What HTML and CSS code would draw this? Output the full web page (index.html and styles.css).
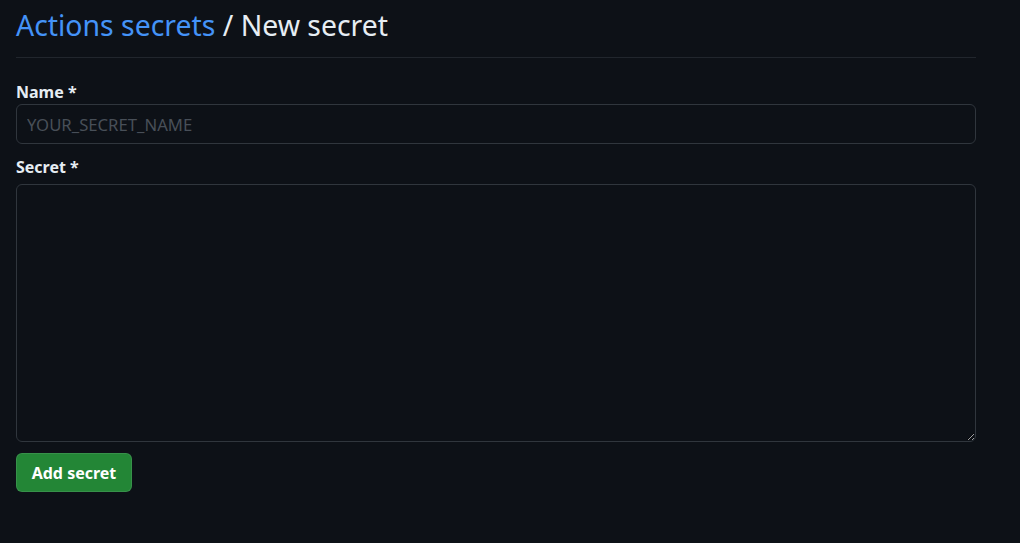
FILE: index.html
```html
<!DOCTYPE html>
<html>
<head>
    <meta charset="utf-8">
    <title>New secret</title>
    <link rel="stylesheet" href="styles.css">
</head>
<body>
    <div class="page">
        <div class="subhead">
            <h2 class="subhead-heading"><a href="#">Actions secrets</a> / New secret</h2>
        </div>
        <form class="secret-form" onsubmit="return false">
            <div class="form-group">
                <label for="secret_name">Name *</label>
                <input type="text" id="secret_name" class="form-control" placeholder="YOUR_SECRET_NAME">
            </div>
            <div class="form-group form-group-secret">
                <label for="secret_value">Secret *</label>
                <textarea id="secret_value" class="form-control"></textarea>
            </div>
            <button type="submit" class="btn-primary">Add secret</button>
        </form>
    </div>
</body>
</html>
```

FILE: styles.css
```css
html { color-scheme: dark; }
body { margin: 0; background: #0d1117; color: #e6edf3; font-family: "Noto Sans", "Open Sans", sans-serif; }
.page { width: 960px; padding: 0 16px; }
.subhead { padding: 3px 0 10px; border-bottom: 1px solid #21262d; }
.subhead-heading { margin: 0; font-size: 28.4px; font-weight: 400; line-height: 44px; }
.subhead-heading a { color: #4493f8; text-decoration: none; }
.secret-form { margin-top: 24px; }
.form-group label { display: block; font-size: 16px; font-weight: 700; line-height: 20px; margin-bottom: 2px; }
.form-group-secret { margin-top: 13px; }
.form-group-secret label { margin-bottom: 7px; }
.form-control { display: block; box-sizing: border-box; width: 100%; margin: 0; padding: 0 10px; background: #0d1117; color: #e6edf3; border: 1px solid #30363d; border-radius: 6px; font-family: inherit; font-size: 16.7px; outline: none; }
input.form-control { height: 40px; }
.form-control::placeholder { color: #484f58; }
textarea.form-control { height: 258px; padding: 8px 10px; resize: vertical; }
.btn-primary { margin-top: 11px; width: 116px; height: 39px; padding: 0; background: #238636; color: #ffffff; border: 1px solid rgba(240, 246, 252, 0.1); border-radius: 6px; font-family: inherit; font-size: 16px; font-weight: 700; cursor: pointer; }
```
